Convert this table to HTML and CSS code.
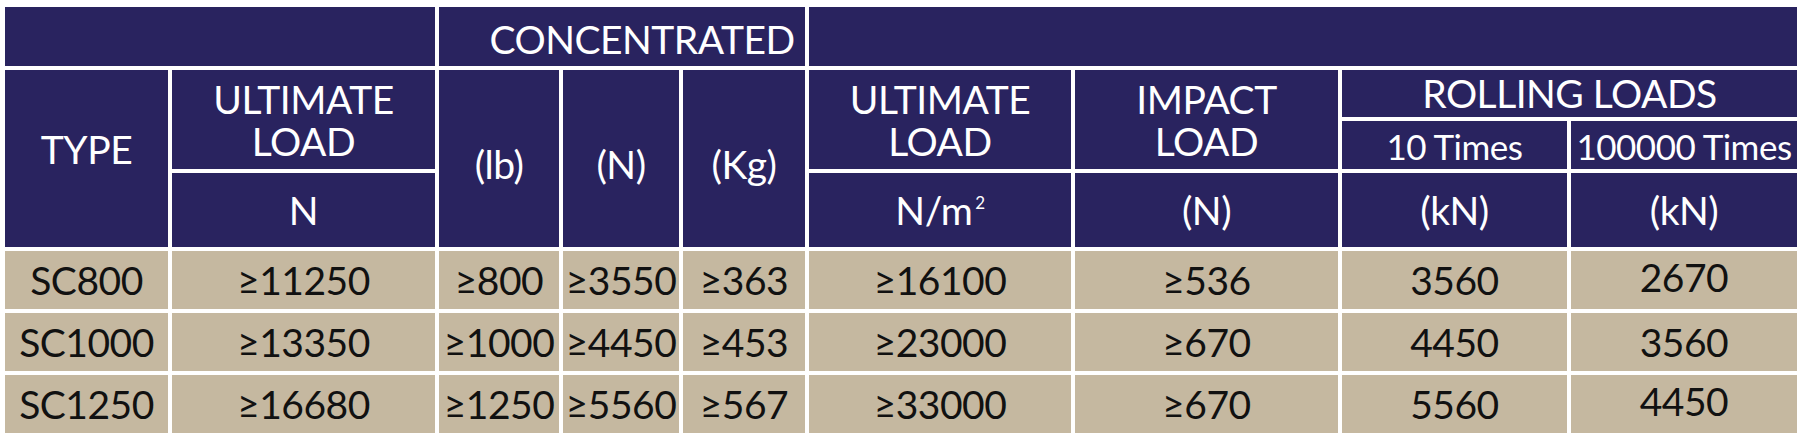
FILE: index.html
```html
<!DOCTYPE html>
<html lang="en">
<head>
<meta charset="utf-8">
<title>Load table</title>
<link rel="stylesheet" href="styles.css">
</head>
<body>
<div class="spec">
  <div class="c h cs2"></div>
  <div class="c h cs3 concentrated">CONCENTRATED</div>
  <div class="c h cs4"></div>

  <div class="c h rs3 type">TYPE</div>
  <div class="c h rs2 two">ULTIMATE<br>LOAD</div>
  <div class="c h rs3 unit">(lb)</div>
  <div class="c h rs3 unit">(N)</div>
  <div class="c h rs3 unit">(Kg)</div>
  <div class="c h rs2 two">ULTIMATE<br>LOAD</div>
  <div class="c h rs2 two">IMPACT<br>LOAD</div>
  <div class="c h cs2">ROLLING LOADS</div>

  <div class="c h small">10 Times</div>
  <div class="c h small">100000 Times</div>

  <div class="c h">N</div>
  <div class="c h"><span>N/m<sup>2</sup></span></div>
  <div class="c h">(N)</div>
  <div class="c h">(kN)</div>
  <div class="c h">(kN)</div>

  <div class="c d">SC800</div>
  <div class="c d">≥11250</div>
  <div class="c d">≥800</div>
  <div class="c d">≥3550</div>
  <div class="c d">≥363</div>
  <div class="c d">≥16100</div>
  <div class="c d">≥536</div>
  <div class="c d">3560</div>
  <div class="c d up">2670</div>

  <div class="c d">SC1000</div>
  <div class="c d">≥13350</div>
  <div class="c d">≥1000</div>
  <div class="c d">≥4450</div>
  <div class="c d">≥453</div>
  <div class="c d">≥23000</div>
  <div class="c d">≥670</div>
  <div class="c d">4450</div>
  <div class="c d">3560</div>

  <div class="c d">SC1250</div>
  <div class="c d">≥16680</div>
  <div class="c d">≥1250</div>
  <div class="c d">≥5560</div>
  <div class="c d">≥567</div>
  <div class="c d">≥33000</div>
  <div class="c d">≥670</div>
  <div class="c d">5560</div>
  <div class="c d up">4450</div>
</div>
</body>
</html>
```

FILE: styles.css
```css
html, body {
  margin: 0;
  padding: 0;
  background: #ffffff;
}

.spec {
  display: grid;
  grid-template-columns: 163px 263px 120px 116px 122px 262px 263px 225px 226px;
  grid-template-rows: 59px 47px 48px 74px 58px 58px 58px;
  gap: 4px;
  margin: 7px 0 0 5px;
  width: max-content;
  font-family: Lato, "Open Sans", sans-serif;
  font-size: 39px;
  letter-spacing: -0.5px;
}

.c {
  display: flex;
  align-items: center;
  justify-content: center;
  text-align: center;
  line-height: 1;
  white-space: nowrap;
  box-sizing: border-box;
}

.h {
  background: #29235f;
  color: #ffffff;
}

.d {
  background: #c5b8a0;
  color: #111111;
}

.cs2 { grid-column: span 2; }
.cs3 { grid-column: span 3; }
.cs4 { grid-column: span 4; }
.rs2 { grid-row: span 2; }
.rs3 { grid-row: span 3; }

.two {
  line-height: 42px;
}

.type {
  padding-bottom: 18px;
}

.unit {
  padding-top: 12px;
}

.small {
  font-size: 35px;
  padding-top: 2px;
}

.concentrated {
  padding-left: 40px;
  padding-top: 6px;
}

.up {
  padding-bottom: 6px;
}

sup {
  font-size: 17px;
  line-height: 0;
  vertical-align: 16px;
  margin-left: 3px;
}
```
